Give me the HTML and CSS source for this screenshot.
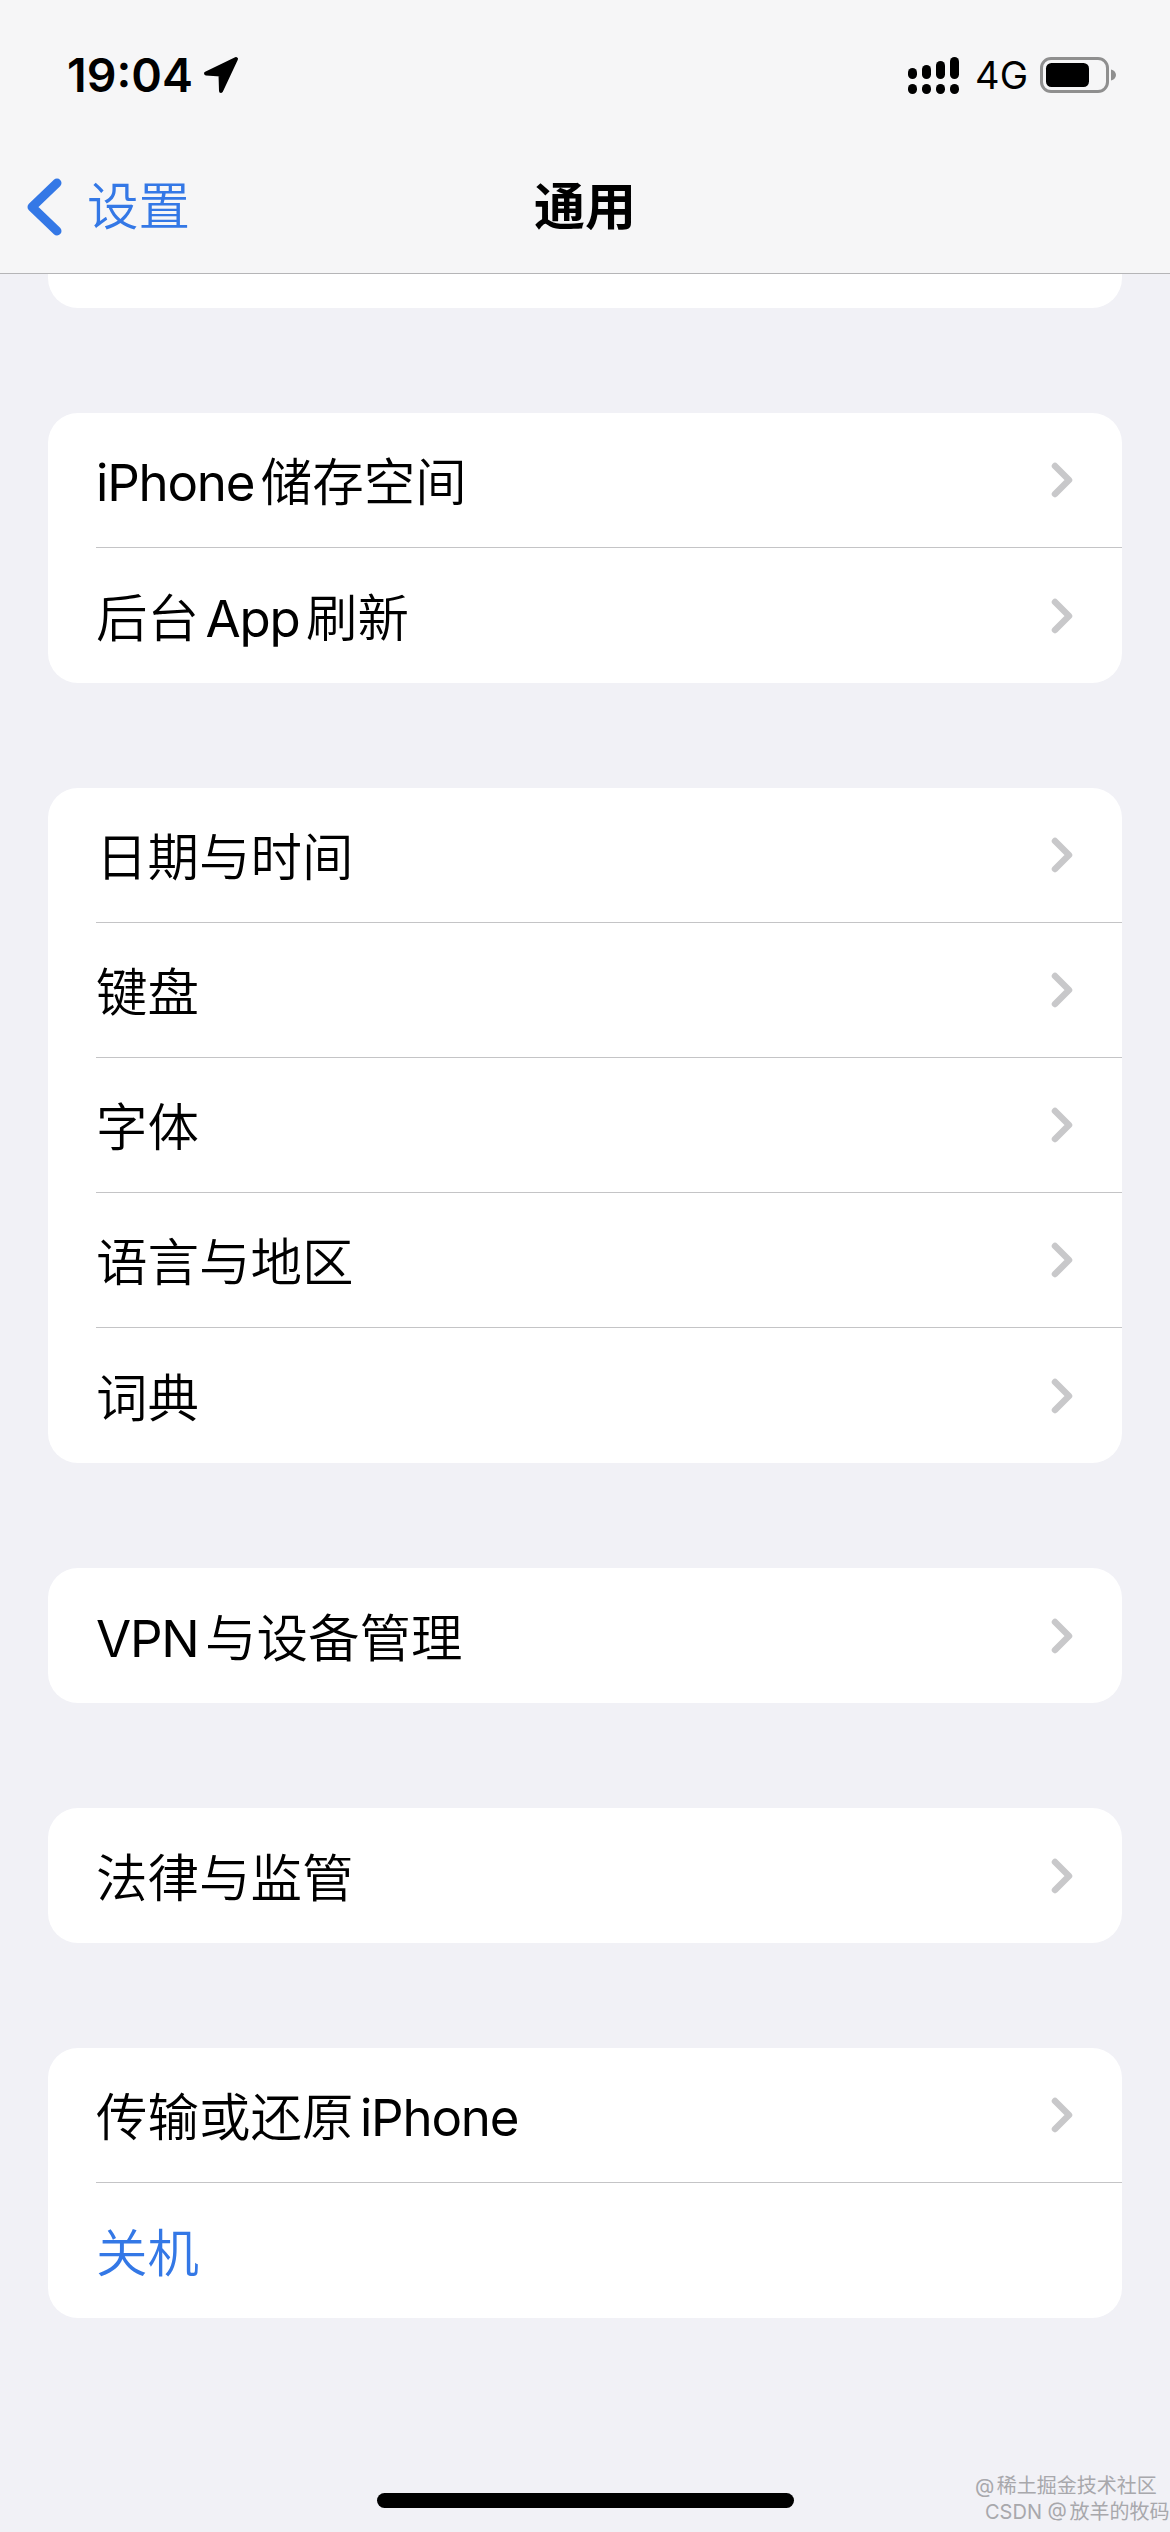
FILE: index.html
```html
<!DOCTYPE html>
<html lang="zh-CN">
<head>
<meta charset="utf-8">
<title>通用</title>
<link rel="stylesheet" href="styles.css">
</head>
<body>
<div class="screen">
  <header class="top">
    <div class="status">
      <div class="status-left">
        <span class="time">19:04</span>
        <svg class="loc" width="36" height="38" viewBox="0 0 36 38"><path d="M33 3 3 17.500 17.500 18.500 18 35Z" fill="#000" stroke="#000" stroke-width="4" stroke-linejoin="round"/></svg>
      </div>
      <div class="status-right">
        <svg class="signal" width="51" height="37" viewBox="0 0 51 37">
          <rect x="0" y="11" width="9" height="11" rx="4.500"/><rect x="14" y="8" width="9" height="14" rx="4.500"/><rect x="28" y="4" width="9" height="18" rx="4.500"/><rect x="42" y="0" width="9" height="22" rx="4.500"/>
          <rect x="0" y="27" width="9" height="10" rx="4.500"/><rect x="14" y="27" width="9" height="10" rx="4.500"/><rect x="28" y="27" width="9" height="10" rx="4.500"/><rect x="42" y="27" width="9" height="10" rx="4.500"/>
        </svg>
        <span class="net">4G</span>
        <svg class="battery" width="76" height="36" viewBox="0 0 76 36">
          <rect x="1.500" y="1.500" width="66" height="33" rx="9.500" fill="none" stroke="#8f8f8f" stroke-width="3"/>
          <rect x="6" y="6" width="43" height="24" rx="5.500" fill="#000"/>
          <path d="M71 12.500c3 .8 5 3 5 5.500s-2 4.700-5 5.500Z" fill="#8f8f8f"/>
        </svg>
      </div>
    </div>
    <nav class="nav">
      <div class="back">
        <svg class="back-icon" width="36" height="58" viewBox="0 0 36 58"><path d="M31 5 6 29 31 53" fill="none" stroke="#3478e6" stroke-width="9" stroke-linecap="round" stroke-linejoin="round"/></svg>
        <span class="back-label">设置</span>
      </div>
      <h1 class="title">通用</h1>
    </nav>
  </header>

  <main class="list">
    <div class="card card-cut"></div>

    <section class="card">
      <div class="row"><span class="label"><span class="lat">iPhone</span>储存空间</span><svg class="chev" width="22" height="36" viewBox="0 0 22 36"><path d="M4 4 18 18 4 32" /></svg></div>
      <div class="row"><span class="label">后台<span class="lat">App</span>刷新</span><svg class="chev" width="22" height="36" viewBox="0 0 22 36"><path d="M4 4 18 18 4 32" /></svg></div>
    </section>

    <section class="card">
      <div class="row"><span class="label">日期与时间</span><svg class="chev" width="22" height="36" viewBox="0 0 22 36"><path d="M4 4 18 18 4 32" /></svg></div>
      <div class="row"><span class="label">键盘</span><svg class="chev" width="22" height="36" viewBox="0 0 22 36"><path d="M4 4 18 18 4 32" /></svg></div>
      <div class="row"><span class="label">字体</span><svg class="chev" width="22" height="36" viewBox="0 0 22 36"><path d="M4 4 18 18 4 32" /></svg></div>
      <div class="row"><span class="label">语言与地区</span><svg class="chev" width="22" height="36" viewBox="0 0 22 36"><path d="M4 4 18 18 4 32" /></svg></div>
      <div class="row"><span class="label">词典</span><svg class="chev" width="22" height="36" viewBox="0 0 22 36"><path d="M4 4 18 18 4 32" /></svg></div>
    </section>

    <section class="card">
      <div class="row"><span class="label"><span class="lat">VPN</span>与设备管理</span><svg class="chev" width="22" height="36" viewBox="0 0 22 36"><path d="M4 4 18 18 4 32" /></svg></div>
    </section>

    <section class="card">
      <div class="row"><span class="label">法律与监管</span><svg class="chev" width="22" height="36" viewBox="0 0 22 36"><path d="M4 4 18 18 4 32" /></svg></div>
    </section>

    <section class="card">
      <div class="row"><span class="label">传输或还原<span class="lat">iPhone</span></span><svg class="chev" width="22" height="36" viewBox="0 0 22 36"><path d="M4 4 18 18 4 32" /></svg></div>
      <div class="row"><span class="label link">关机</span></div>
    </section>
  </main>

  <div class="home-indicator"></div>

  <div class="watermark">
    <span class="wm-a">@稀土掘金技术社区</span>
    <span class="wm-b">CSDN @放羊的牧码</span>
  </div>
</div>
</body>
</html>
```

FILE: styles.css
```css
* { box-sizing: border-box; }
html, body { margin: 0; padding: 0; }
body {
  background: #f1f1f6;
  font-family: Inter, "Noto Sans CJK SC", sans-serif;
  color: #000;
  text-autospace: normal;
}
.screen {
  position: relative;
  width: 1170px;
  height: 2532px;
  overflow: hidden;
  display: flex;
  flex-direction: column;
}
.top {
  height: 274px;
  background: #f6f6f7;
  border-bottom: 1px solid #b5b5b7;
  display: flex;
  flex-direction: column;
  flex: none;
}
.status {
  height: 150px;
  display: flex;
  align-items: center;
  justify-content: space-between;
  padding: 0 54px 0 67px;
}
.status-left { display: flex; align-items: center; gap: 10px; }
.time { font-size: 46.500px; font-weight: 600; line-height: 1; }
.status-right { display: flex; align-items: center; gap: 16px; }
.net { font-size: 38px; font-weight: 400; line-height: 1; margin-right: -4px; }
.nav {
  position: relative;
  height: 113px;
  display: flex;
  align-items: center;
  justify-content: center;
}
.back {
  position: absolute;
  left: 26px;
  top: 0;
  height: 100%;
  display: flex;
  align-items: center;
  gap: 25px;
}
.back-label { font-size: 51.500px; font-weight: 350; color: #3478e6; line-height: 1; }
.title { margin: 0; font-size: 51px; font-weight: 700; line-height: 1; }
.list {
  display: flex;
  flex-direction: column;
  gap: 105px;
  padding: 0 48px;
}
.card {
  background: #fff;
  border-radius: 30px;
  overflow: hidden;
}
.card-cut {
  height: 34px;
  border-radius: 0 0 30px 30px;
}
.row {
  height: 135px;
  margin-left: 48px;
  padding-right: 49px;
  display: flex;
  align-items: center;
  justify-content: space-between;
  font-size: 51.500px;
  font-weight: 350;
  line-height: 1;
  border-bottom: 1px solid #c4c4c6;
}
.row:last-child { border-bottom: 0; }
.label { position: relative; top: 3px; }
.lat { letter-spacing: -1.200px; font-weight: 400; font-size: 51px; }
.chev { flex: none; fill: none; stroke: #c8c8ca; stroke-width: 6.500; stroke-linecap: round; stroke-linejoin: round; }
.link { color: #3478e6; }
.home-indicator {
  width: 417px;
  height: 15px;
  margin: 175px 0 0 377px;
  border-radius: 7.500px;
  background: #000;
  flex: none;
}
.watermark {
  position: absolute;
  left: 975px;
  top: 2475px;
  display: flex;
  flex-direction: column;
  gap: 4px;
  font-size: 20px;
  line-height: 22px;
  color: #a8a8ac;
  white-space: nowrap;
}
.wm-b { margin-left: 10px; }
```
